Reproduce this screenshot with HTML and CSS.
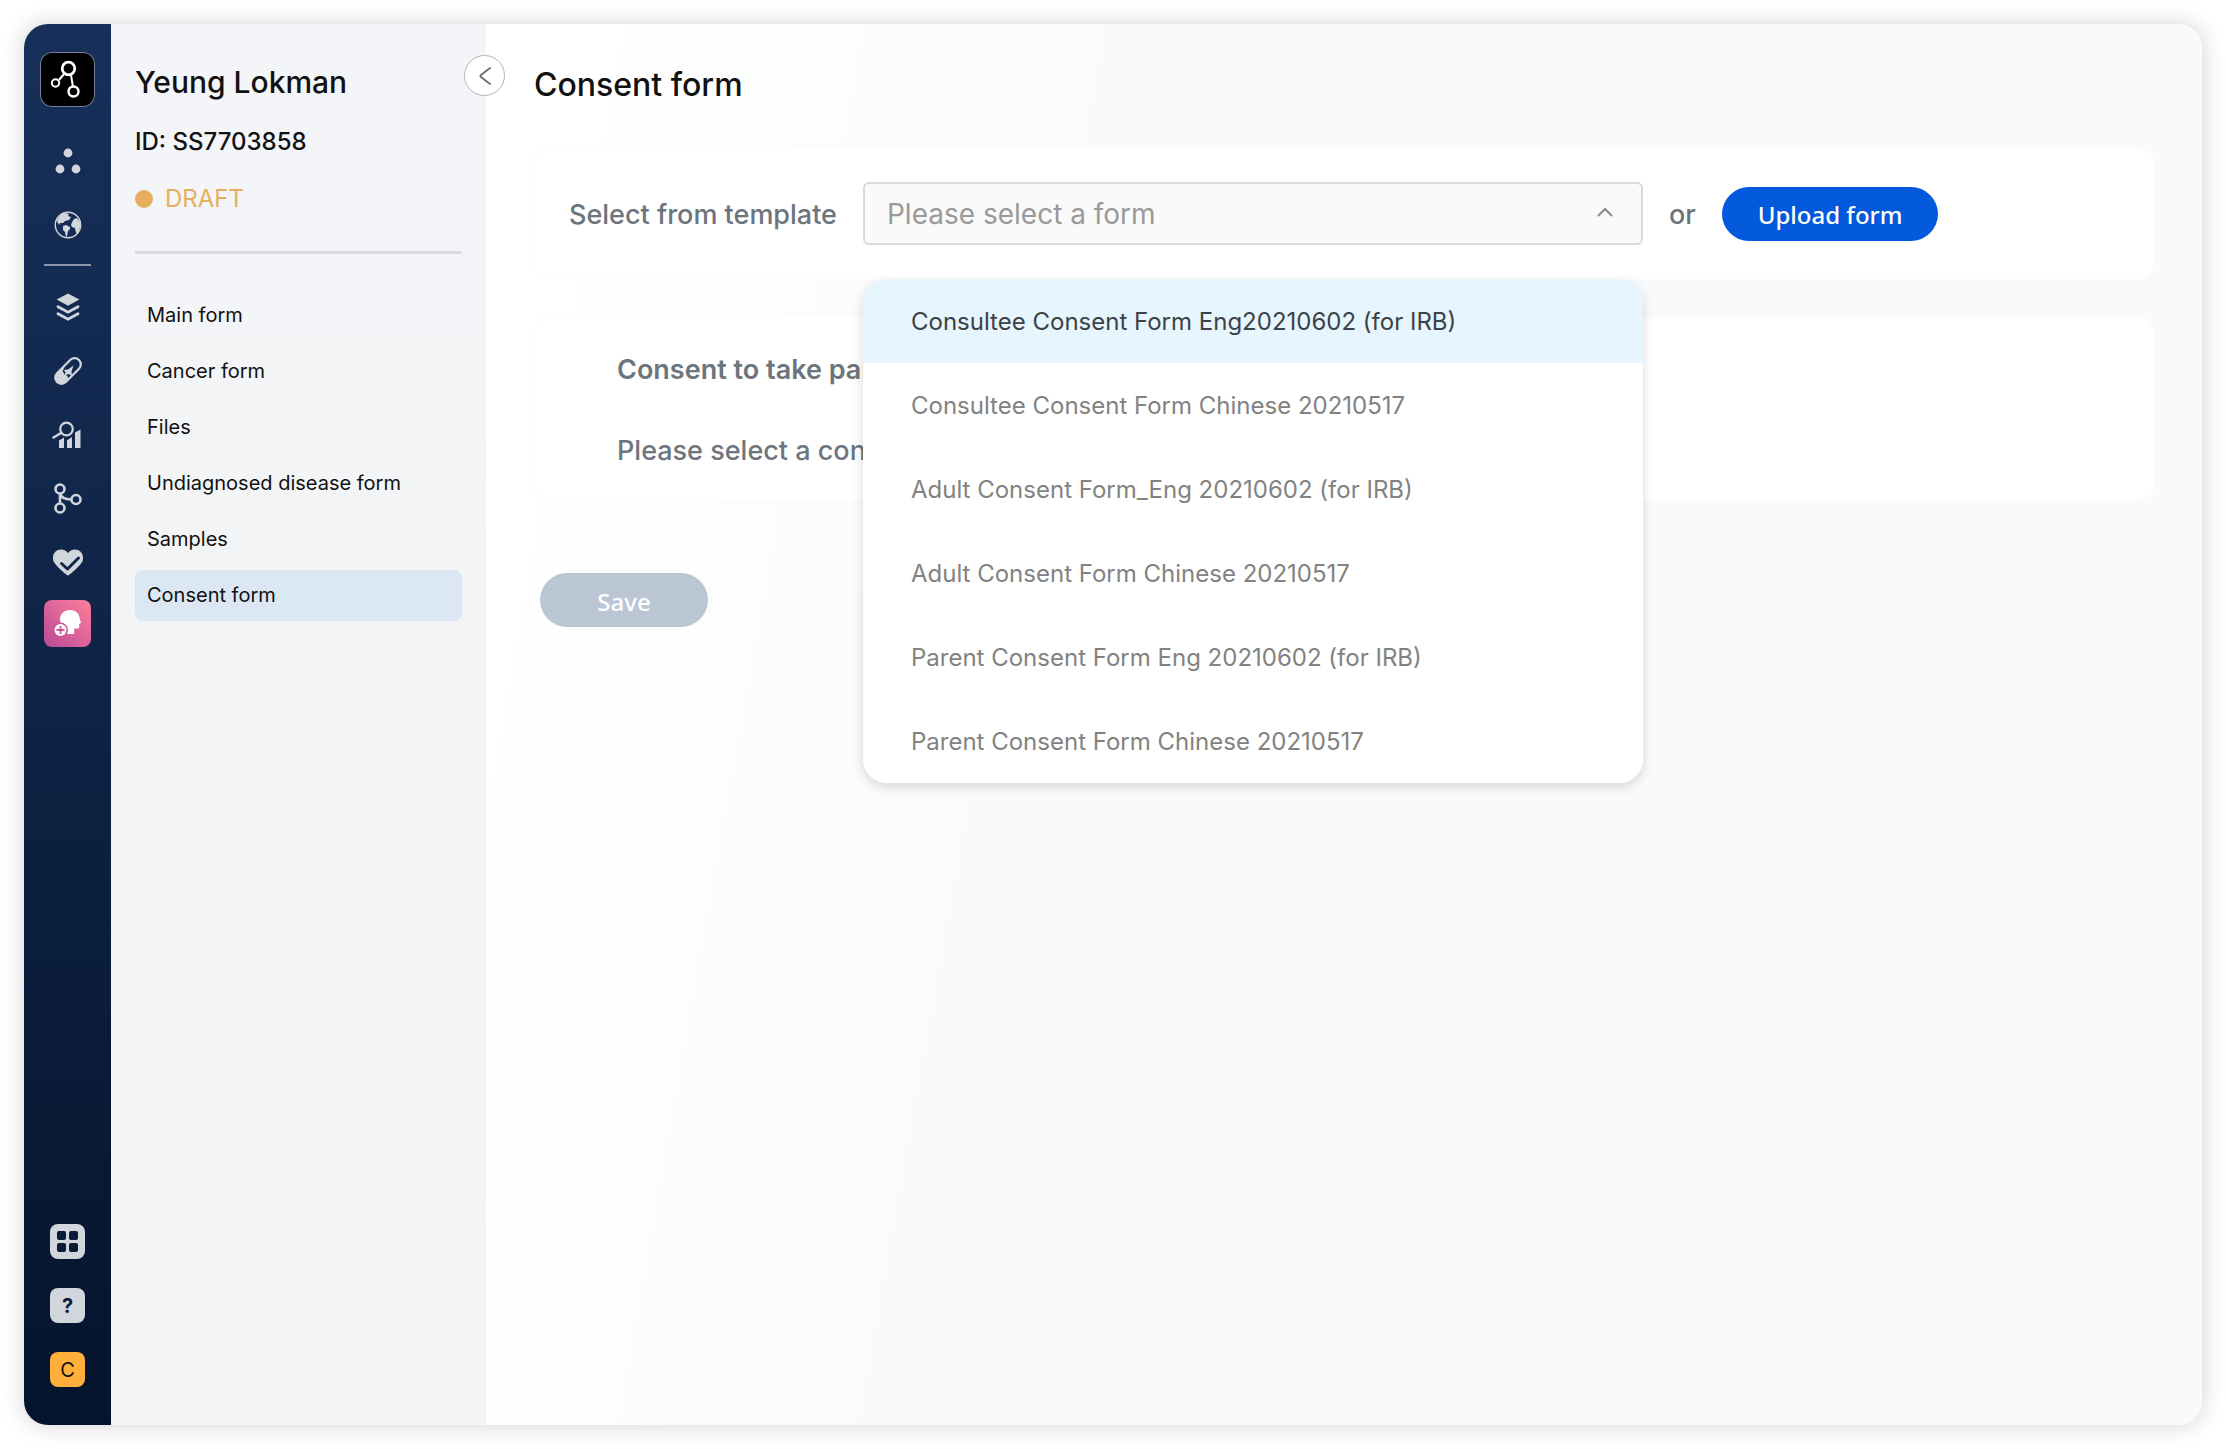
FILE: index.html
```html
<!DOCTYPE html>
<html lang="en">
<head>
    <meta charset="UTF-8">
    <meta name="viewport" content="width=device-width, initial-scale=1.0">
    <title>Consent form</title>
    <link rel="stylesheet" href="styles.css">
</head>
<body>
    <div class="window">
        <nav class="rail" aria-label="Main">
            <a href="#" class="logo" aria-label="Home">
                <svg width="55" height="55" viewBox="0 0 55 55" fill="none" stroke="#fff">
                    <path d="M24 22l-5 6M31 23l2 12" stroke-width="2"/>
                    <circle cx="28.5" cy="16.5" r="6.3" stroke-width="2.8"/>
                    <circle cx="15.5" cy="31" r="3.7" stroke-width="2"/>
                    <circle cx="33.5" cy="39.5" r="5" stroke-width="2.4"/>
                </svg>
            </a>
            <div class="rail-group">
                <a href="#" class="rail-icon" aria-label="Groups">
                    <svg width="32" height="32" viewBox="0 0 32 32" fill="currentColor">
                        <circle cx="16" cy="8" r="4.4"/>
                        <circle cx="8" cy="24" r="4.4"/>
                        <circle cx="24" cy="24" r="4.4"/>
                    </svg>
                </a>
                <a href="#" class="rail-icon" aria-label="World">
                    <svg width="32" height="32" viewBox="0 0 32 32" fill="currentColor">
                        <circle cx="16" cy="16" r="12.7" fill="none" stroke="currentColor" stroke-width="1.4"/>
                        <path d="M5 12c1-4 4-7 8-8l4 1-1 2 3 1-2 3-4 1-2 2-3 0-1 2z"/>
                        <path d="M11 17l3-1 4 2 0 2-2 2-1 5-1 1-1-5-2-2z"/>
                        <path d="M20 13l2-3 3-1 3 4 0 5-2 6-2 0-1-5-3-1-1-2z"/>
                    </svg>
                </a>
            </div>
            <hr class="rail-line">
            <div class="rail-group">
                <a href="#" class="rail-icon" aria-label="Layers">
                    <svg width="32" height="32" viewBox="0 0 32 32" fill="currentColor">
                        <path d="M16 2.400l11.300 6.200-11.300 6.200L4.700 8.600z"/>
                        <path d="M6 15.700l10 5.500 10-5.500M6 22.700l10 5.500 10-5.500" fill="none" stroke="currentColor" stroke-width="2.800" stroke-linecap="round"/>
                    </svg>
                </a>
                <a href="#" class="rail-icon" aria-label="Samples">
                    <svg width="32" height="32" viewBox="0 0 32 32">
                        <g transform="rotate(-45 16 16)">
                            <rect x="0.500" y="9.800" width="31" height="12.400" rx="6.200" fill="none" stroke="currentColor" stroke-width="2.200"/>
                            <path d="M18 9.800H7a6.200 6.200 0 0 0 0 12.400h4l1-3.500-1-2.700 1-3.500z" fill="currentColor"/>
                        </g>
                        <path d="M21.500 10.500l-2 6 .5 4-4-1.500-4 2.500 1.500-4-1.500-2.500 4-.5z" fill="currentColor"/>
                    </svg>
                </a>
                <a href="#" class="rail-icon" aria-label="Analysis">
                    <svg width="32" height="32" viewBox="0 0 32 32" fill="currentColor">
                        <circle cx="14.500" cy="10" r="6.300" fill="none" stroke="currentColor" stroke-width="2.200"/>
                        <path d="M9 14l-7.500 4.500" stroke="currentColor" stroke-width="2.600" stroke-linecap="round"/>
                        <path d="M7 21.500l5-3V29H7zM15 21.500l5-3.500v11h-5zM23 13.500l5.500-3V29H23z"/>
                    </svg>
                </a>
                <a href="#" class="rail-icon" aria-label="Workflow">
                    <svg width="32" height="32" viewBox="0 0 32 32" fill="none" stroke="currentColor" stroke-width="2.600">
                        <circle cx="8" cy="6" r="4.500"/>
                        <circle cx="8" cy="25" r="4.500"/>
                        <circle cx="24" cy="16.500" r="4.500"/>
                        <path d="M8 11v9M8 10c1 5 5 6.500 11 6.500"/>
                    </svg>
                </a>
                <a href="#" class="rail-icon" aria-label="Health">
                    <svg width="32" height="32" viewBox="0 0 32 32">
                        <path d="M16 28.500c-1 0-13.500-10.500-14.700-15C-.2 7 4 2.600 9 2.600c3 0 5.500 1.400 7 3.600 1.500-2.200 4-3.600 7-3.600 5 0 9.200 4.400 7.700 10.900C29.500 18 17 28.500 16 28.500z" fill="currentColor"/>
                        <path d="M9.500 16.500l6 5.500 11-11" fill="none" stroke="#122649" stroke-width="3" stroke-linecap="round" stroke-linejoin="round"/>
                    </svg>
                </a>
            </div>
            <a href="#" class="rail-active" aria-label="Patients" aria-current="true">
                <svg width="47" height="47" viewBox="0 0 47 47">
                    <path d="M26 10c6 0 9.500 4 9.800 9l1.200 4-1.800 1v3.500q0 1-1 1h-4V34H21v-6c-3-2.500-5-5-5-9 0-5 4-9 10-9z" fill="#fff"/>
                    <circle cx="16.500" cy="30" r="7.600" fill="#d0549a"/>
                    <circle cx="16.500" cy="30" r="6" fill="#fff"/>
                    <path d="M16.500 26v8M12.500 30h8" stroke="#d0549a" stroke-width="1.800"/>
                </svg>
            </a>
            <div class="rail-bottom">
                <a href="#" class="tile" aria-label="Apps">
                    <svg width="35" height="35" viewBox="0 0 35 35" fill="#0a1b38">
                        <rect x="7" y="7" width="9" height="9" rx="2"/>
                        <rect x="19" y="7" width="9" height="9" rx="2"/>
                        <rect x="7" y="19" width="9" height="9" rx="2"/>
                        <rect x="19" y="19" width="9" height="9" rx="2"/>
                    </svg>
                </a>
                <a href="#" class="tile help">?</a>
                <a href="#" class="tile account">C</a>
            </div>
        </nav>

        <aside class="sidebar">
            <button class="collapse" aria-label="Collapse panel">
                <svg width="14" height="20" viewBox="0 0 14 20" fill="none" stroke="#6c757d" stroke-width="2" stroke-linecap="round" stroke-linejoin="round">
                    <path d="M12 2L3 9q-1 1 0 2l9 7"/>
                </svg>
            </button>
            <h2 class="patient-name">Yeung Lokman</h2>
            <div class="patient-id">ID: SS7703858</div>
            <div class="status"><span class="status-dot"></span>DRAFT</div>
            <hr class="sidebar-line">
            <nav class="form-list" aria-label="Forms">
                <a href="#">Main form</a>
                <a href="#">Cancer form</a>
                <a href="#">Files</a>
                <a href="#">Undiagnosed disease form</a>
                <a href="#">Samples</a>
                <a href="#" class="active" aria-current="page">Consent form</a>
            </nav>
        </aside>

        <main class="content">
            <h1>Consent form</h1>
            <section class="card template-card">
                <label for="template">Select from template</label>
                <div class="template-select">
                    <select id="template">
                        <option value="">Please select a form</option>
                        <option>Consultee Consent Form Eng20210602 (for IRB)</option>
                        <option>Consultee Consent Form Chinese 20210517</option>
                        <option>Adult Consent Form_Eng 20210602 (for IRB)</option>
                        <option>Adult Consent Form Chinese 20210517</option>
                        <option>Parent Consent Form Eng 20210602 (for IRB)</option>
                        <option>Parent Consent Form Chinese 20210517</option>
                    </select>
                    <svg class="caret" width="18" height="10" viewBox="0 0 18 10" fill="none" stroke="#8a8a8a" stroke-width="2">
                        <path d="M2 9l7-7 7 7"/>
                    </svg>
                    <ul class="menu" id="template-menu">
                        <li><button class="selected">Consultee Consent Form Eng20210602 (for IRB)</button></li>
                        <li><button>Consultee Consent Form Chinese 20210517</button></li>
                        <li><button>Adult Consent Form_Eng 20210602 (for IRB)</button></li>
                        <li><button>Adult Consent Form Chinese 20210517</button></li>
                        <li><button>Parent Consent Form Eng 20210602 (for IRB)</button></li>
                        <li><button>Parent Consent Form Chinese 20210517</button></li>
                    </ul>
                </div>
                <span class="or">or</span>
                <button class="button upload">Upload form</button>
            </section>
            <section class="card consent-card">
                <h3>Consent to take part</h3>
                <p>Please select a consent form</p>
            </section>
            <button class="button save" disabled>Save</button>
        </main>
    </div>

    <script>
        var select = document.getElementById("template");
        var menu = document.getElementById("template-menu");

        // Open our own menu instead of the native one
        select.addEventListener("mousedown", function(event) {
            event.preventDefault();
            menu.hidden = !menu.hidden;
        });

        menu.addEventListener("click", function(event) {
            if (event.target.tagName === "BUTTON") {
                select.value = event.target.innerText;
                menu.hidden = true;
            }
        });
    </script>
</body>
</html>
```
FILE: styles.css
```css
* {
    box-sizing: border-box;
}

body {
    font-family: Inter, "Liberation Sans", sans-serif;
    margin: 0;
    padding: 24px;
    min-height: 100vh;
    display: flex;
    background-color: #fff;
    color: #111;
}

h1, h2, h3, p, ul, hr {
    margin: 0;
    padding: 0;
}

a {
    color: inherit;
    text-decoration: none;
}

button, select {
    font: inherit;
    cursor: pointer;
}

.window {
    flex: 1;
    display: flex;
    border-radius: 24px;
    box-shadow: 0 0 24px rgba(0, 0, 0, 0.18);
}

/* Icon rail */
.rail {
    width: 87px;
    flex-shrink: 0;
    padding: 28px 0 38px;
    display: flex;
    flex-direction: column;
    align-items: center;
    border-radius: 24px 0 0 24px;
    background: linear-gradient(#17305a, #05142d);
    color: #d1d5dc;
}

.rail svg {
    display: block;
}

.logo {
    margin-bottom: 38px;
    border-radius: 12px;
    background-color: #000;
    box-shadow: inset 0 0 0 1px #76829b;
}

.rail-group {
    display: flex;
    flex-direction: column;
    gap: 32px;
}

.rail-line {
    width: 47px;
    height: 2px;
    margin: 23px 0 25px;
    border: none;
    background-color: #8b96a9;
}

.rail-active {
    margin-top: 21px;
    border-radius: 8px;
    background: linear-gradient(to top right, #bb4a98, #fd7f9b);
}

.rail-bottom {
    margin-top: auto;
    display: flex;
    flex-direction: column;
    gap: 29px;
}

.tile {
    width: 35px;
    height: 35px;
    border-radius: 8px;
    background-color: #d1d5dc;
    color: #0a1b38;
    font-size: 20px;
    line-height: 36px;
    text-align: center;
}

.help {
    font-weight: 700;
}

.account {
    background-color: #ffb03b;
    color: #111;
}

/* Patient panel */
.sidebar {
    position: relative;
    width: 375px;
    flex-shrink: 0;
    padding: 40px 24px;
    background: linear-gradient(#f3f5f8, #f3f3f3);
}

.collapse {
    position: absolute;
    top: 31px;
    right: -19px;
    width: 41px;
    height: 41px;
    padding: 0;
    display: flex;
    align-items: center;
    justify-content: center;
    border: 1px solid #b0b5bb;
    border-radius: 50%;
    background-color: #fff;
}

.patient-name {
    font-size: 30px;
    font-weight: 500;
    line-height: 36px;
}

.patient-id {
    margin-top: 28px;
    font-size: 24px;
    font-weight: 500;
    line-height: 28px;
}

.status {
    margin-top: 29px;
    display: flex;
    align-items: center;
    gap: 12px;
    font-size: 24px;
    line-height: 28px;
    color: #e5af5d;
}

.status-dot {
    width: 18px;
    height: 18px;
    border-radius: 50%;
    background-color: #e5af5d;
}

.sidebar-line {
    height: 3px;
    margin: 38px 0 36px;
    border: none;
    background-color: #dadcdf;
}

.form-list {
    display: flex;
    flex-direction: column;
    gap: 5px;
}

.form-list a {
    padding: 0 12px;
    border-radius: 8px;
    font-size: 20px;
    line-height: 51px;
}

.form-list .active {
    background-color: #dbe8f3;
}

/* Main area */
.content {
    flex: 1;
    padding: 43px 48px;
    border-radius: 0 24px 24px 0;
    background: linear-gradient(100deg, #fff 6%, #f9fafc 32%);
}

h1 {
    font-size: 32px;
    font-weight: 500;
    line-height: 36px;
}

.card {
    border: 1px solid #fcfcfd;
    border-radius: 16px;
    background-color: #fff;
    color: #6c757d;
    font-size: 27px;
    font-weight: 500;
    line-height: 34px;
}

.template-card {
    margin-top: 44px;
    padding: 34px;
    display: flex;
    align-items: center;
    gap: 26px;
}

.template-card label, .or {
    padding-top: 2px;
}

.template-select {
    position: relative;
    flex: 0 1 780px;
}

.template-select select {
    display: block;
    width: 100%;
    height: 63px;
    padding: 0 22px;
    appearance: none;
    border: 2px solid #d9d9d9;
    border-radius: 6px;
    background-color: #fafafa;
    color: #999;
    font-size: 28px;
    font-weight: 400;
}

.caret {
    position: absolute;
    top: 25px;
    right: 29px;
    pointer-events: none;
}

.menu {
    position: absolute;
    top: 97px;
    left: 0;
    width: 100%;
    overflow: hidden;
    border-radius: 24px;
    background-color: #fff;
    box-shadow: 0 4px 12px rgba(0, 0, 0, 0.15);
    list-style: none;
}

.menu button {
    display: block;
    width: 100%;
    height: 84px;
    padding: 1px 48px 0;
    border: none;
    background-color: #fff;
    color: #828282;
    font-size: 24px;
    font-weight: 400;
    text-align: left;
}

.menu .selected {
    background-color: #e7f5fe;
    color: #3c4246;
}

.button {
    height: 54px;
    padding: 2px 36px 0;
    border: none;
    border-radius: 28px;
    color: #fff;
    font-family: "Noto Sans", sans-serif;
    font-size: 24px;
    font-weight: 500;
}

.upload {
    background-color: #0359dc;
}

.consent-card {
    margin-top: 36px;
    padding: 36px 82px 32px;
}

.consent-card h3 {
    margin-bottom: 47px;
    font-size: 27px;
    font-weight: 600;
}

.save {
    width: 168px;
    margin: 72px 0 0 6px;
    background-color: #bbc6d5;
}
```
